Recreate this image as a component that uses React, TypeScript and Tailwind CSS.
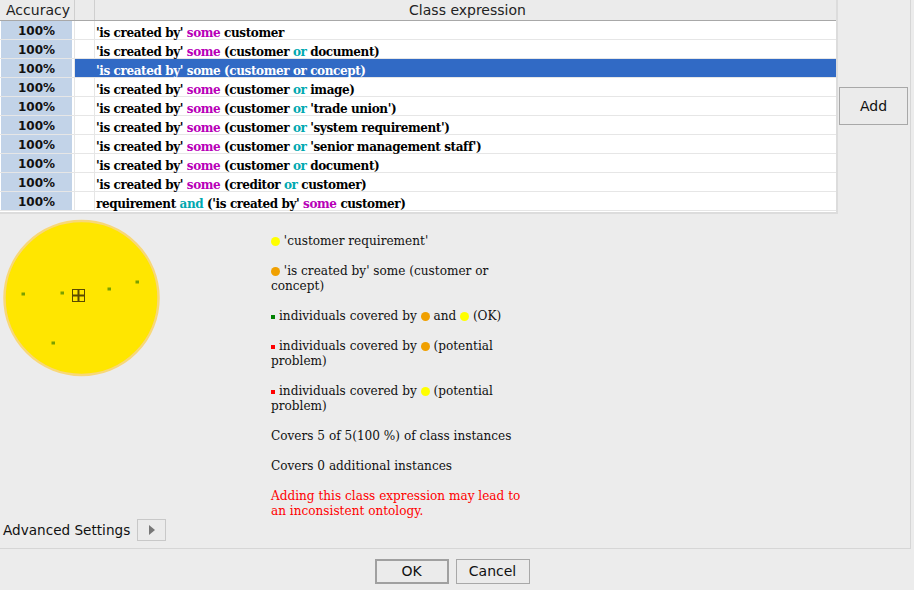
import React from "react";

type Part = { t: string; k?: "some" | "or" };

const ROWS: Part[][] = [
  [{ t: "'is created by' " }, { t: "some", k: "some" }, { t: " customer" }],
  [{ t: "'is created by' " }, { t: "some", k: "some" }, { t: " (customer " }, { t: "or", k: "or" }, { t: " document)" }],
  [{ t: "'is created by' " }, { t: "some", k: "some" }, { t: " (customer " }, { t: "or", k: "or" }, { t: " concept)" }],
  [{ t: "'is created by' " }, { t: "some", k: "some" }, { t: " (customer " }, { t: "or", k: "or" }, { t: " image)" }],
  [{ t: "'is created by' " }, { t: "some", k: "some" }, { t: " (customer " }, { t: "or", k: "or" }, { t: " 'trade union')" }],
  [{ t: "'is created by' " }, { t: "some", k: "some" }, { t: " (customer " }, { t: "or", k: "or" }, { t: " 'system requirement')" }],
  [{ t: "'is created by' " }, { t: "some", k: "some" }, { t: " (customer " }, { t: "or", k: "or" }, { t: " 'senior management staff')" }],
  [{ t: "'is created by' " }, { t: "some", k: "some" }, { t: " (customer " }, { t: "or", k: "or" }, { t: " document)" }],
  [{ t: "'is created by' " }, { t: "some", k: "some" }, { t: " (creditor " }, { t: "or", k: "or" }, { t: " customer)" }],
  [{ t: "requirement " }, { t: "and", k: "or" }, { t: " ('is created by' " }, { t: "some", k: "some" }, { t: " customer)" }],
];

const SELECTED = 2;

function Expr({ parts, selected }: { parts: Part[]; selected: boolean }) {
  return (
    <span className="whitespace-pre">
      {parts.map((p, i) => (
        <span
          key={i}
          className={
            selected
              ? "text-white"
              : p.k === "some"
              ? "text-[#b800b8]"
              : p.k === "or"
              ? "text-[#00a8b0]"
              : "text-black"
          }
        >
          {p.t}
        </span>
      ))}
    </span>
  );
}

function Dot({ color }: { color: string }) {
  return <span className={`inline-block w-[9px] h-[9px] rounded-full align-[-1px] ${color}`} />;
}

function Square({ color }: { color: string }) {
  return <span className={`inline-block w-[4px] h-[4px] align-[1px] mr-[4px] ${color}`} />;
}

function Venn() {
  const dots = [
    [23, 79],
    [62, 78],
    [109, 74],
    [137, 67],
    [53, 128],
  ];
  return (
    <svg width="165" height="165" viewBox="0 0 165 165" className="block">
      <circle cx="81.5" cy="83" r="77" fill="#ffe600" stroke="#f8d878" strokeWidth="2.5" />
      {dots.map(([x, y], i) => (
        <rect key={i} x={x - 1.5} y={y - 1.5} width="3.5" height="3" fill="#7aa000" />
      ))}
      <g stroke="#5a4a00" strokeWidth="1" fill="none">
        <rect x="72.5" y="74.5" width="12" height="12" />
        <line x1="78.5" y1="74.5" x2="78.5" y2="86.5" strokeWidth="2" />
        <line x1="72.5" y1="80.5" x2="84.5" y2="80.5" strokeWidth="2" />
      </g>
    </svg>
  );
}

export default function App() {
  const serif = "font-['DejaVu_Serif','Liberation_Serif',serif]";
  const sans = "font-['DejaVu_Sans','Liberation_Sans',sans-serif]";
  return (
    <div className={`w-[914px] h-[590px] bg-[#ececec] overflow-hidden ${sans}`}>
      <div className="h-[549px] w-[911px] border-r border-b border-[#d6d6d6] flex flex-col">
        {/* top: table + add */}
        <div className="flex h-[214px]">
          <div className="w-[838px] h-[214px] border-r-2 border-b-2 border-[#dcdcdc] bg-white flex flex-col">
            <div className="flex h-[21px] bg-[#ebebeb] border-b border-[#a8a8a8] text-[14px] text-[#222] leading-[20px]">
              <div className="w-[75px] border-r border-[#cfcfcf] text-center pl-[2px]">Accuracy</div>
              <div className="w-[20px] border-r border-[#cfcfcf]" />
              <div className="flex-1 text-center pl-[4px]">Class expression</div>
            </div>
            {ROWS.map((r, i) => {
              const sel = i === SELECTED;
              return (
                <div key={i} className="flex h-[19px] border-b border-[#e6e6e6]">
                  <div className="w-[75px] border-r border-[#e6e6e6] pl-[1px] pr-[2px]">
                    <div className="h-full bg-[#c2d3e8] text-[12px] font-bold text-[#111] text-center leading-[20px]">
                      100%
                    </div>
                  </div>
                  <div
                    className={`flex flex-1 ${sel ? "bg-[#316ac5]" : ""}`}
                  >
                    <div className={`w-[20px] border-r ${sel ? "border-[#316ac5]" : "border-[#e6e6e6]"}`} />
                    <div className={`flex-1 pl-[1px] text-[12px] font-bold tracking-[-0.4px] leading-[25px] ${serif}`}>
                      <Expr parts={r} selected={sel} />
                    </div>
                  </div>
                </div>
              );
            })}
          </div>
          <div className="pt-[87px] pl-[1px]">
            <button className="w-[69px] h-[38px] bg-[#ebebeb] border border-[#a8a8a8] text-[14px] text-[#111]">
              Add
            </button>
          </div>
        </div>

        {/* middle: venn + legend */}
        <div className="flex flex-1">
          <div className="w-[271px] pt-[1px]">
            <Venn />
          </div>
          <div className={`pt-[20px] text-[12.1px] leading-[15px] text-[#111] whitespace-nowrap ${serif}`}>
            <p className="mb-[15px]">
              <Dot color="bg-[#ffff00]" /> 'customer requirement'
            </p>
            <p className="mb-[15px]">
              <Dot color="bg-[#f0a000]" /> 'is created by' some (customer or
              <br />
              concept)
            </p>
            <p className="mb-[15px]">
              <Square color="bg-[#008000]" />
              individuals covered by <Dot color="bg-[#f0a000]" /> and <Dot color="bg-[#ffff00]" /> (OK)
            </p>
            <p className="mb-[15px]">
              <Square color="bg-[#ff0000]" />
              individuals covered by <Dot color="bg-[#f0a000]" /> (potential
              <br />
              problem)
            </p>
            <p className="mb-[15px]">
              <Square color="bg-[#ff0000]" />
              individuals covered by <Dot color="bg-[#ffff00]" /> (potential
              <br />
              problem)
            </p>
            <p className="mb-[15px]">Covers 5 of 5(100 %) of class instances</p>
            <p className="mb-[15px]">Covers 0 additional instances</p>
            <p className="text-[#ff0000]">
              Adding this class expression may lead to
              <br />
              an inconsistent ontology.
            </p>
          </div>
        </div>

        {/* advanced settings */}
        <div className="flex items-center h-[22px] mb-[7px] pl-[3px] gap-[7px]">
          <span className="text-[13.6px] text-[#111]">Advanced Settings</span>
          <button className="w-[29px] h-[22px] bg-[#ebebeb] border border-[#c8c8c8] flex items-center justify-center">
            <svg width="8" height="10" viewBox="0 0 8 10">
              <path d="M1 0 L7 5 L1 10 Z" fill="#777" />
            </svg>
          </button>
        </div>
      </div>

      {/* buttons */}
      <div className="flex justify-center gap-[7px] pt-[10px] pr-[10px]">
        <button className="w-[74px] h-[25px] bg-[#ebebeb] border-2 border-[#a0a0a0] text-[14px] text-[#111]">
          OK
        </button>
        <button className="w-[74px] h-[25px] bg-[#ebebeb] border border-[#a8a8a8] text-[14px] text-[#111]">
          Cancel
        </button>
      </div>
    </div>
  );
}
